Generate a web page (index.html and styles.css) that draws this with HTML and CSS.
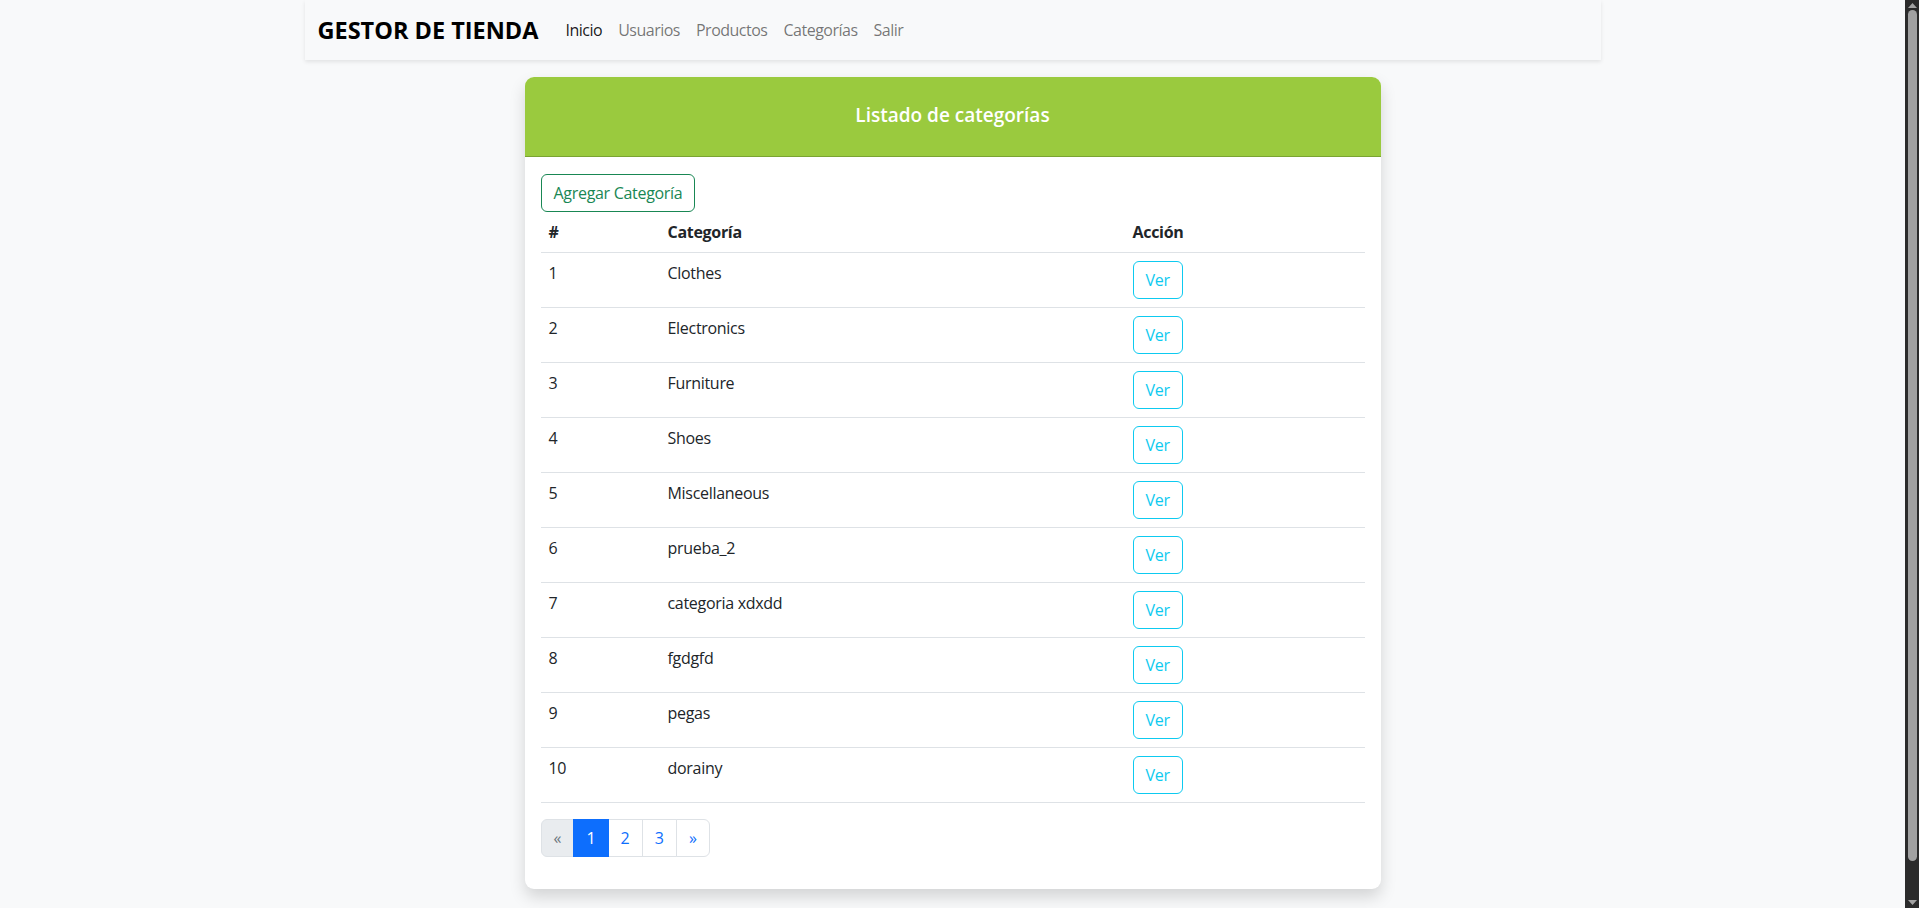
FILE: index.html
```html
<!DOCTYPE html>
<html lang="es">
<head>
<meta charset="utf-8">
<title>Gestor de Tienda</title>
<link rel="stylesheet" href="styles.css">
</head>
<body>
<div class="container">
  <nav class="navbar">
    <a class="brand" href="#">GESTOR DE TIENDA</a>
    <ul class="nav">
      <li><a class="nav-link active" href="#">Inicio</a></li>
      <li><a class="nav-link" href="#">Usuarios</a></li>
      <li><a class="nav-link" href="#">Productos</a></li>
      <li><a class="nav-link" href="#">Categorías</a></li>
      <li><a class="nav-link" href="#">Salir</a></li>
    </ul>
  </nav>
</div>
<main class="main">
  <section class="card">
    <header class="card-header">
      <h2 class="card-title">Listado de categorías</h2>
    </header>
    <div class="card-body">
      <button class="btn btn-success-outline" type="button">Agregar Categoría</button>
      <table class="table">
        <colgroup>
          <col class="col-id">
          <col class="col-name">
          <col class="col-action">
        </colgroup>
        <thead>
          <tr><th>#</th><th>Categoría</th><th>Acción</th></tr>
        </thead>
        <tbody>
          <tr><td>1</td><td>Clothes</td><td><button class="btn btn-info-outline" type="button">Ver</button></td></tr>
          <tr><td>2</td><td>Electronics</td><td><button class="btn btn-info-outline" type="button">Ver</button></td></tr>
          <tr><td>3</td><td>Furniture</td><td><button class="btn btn-info-outline" type="button">Ver</button></td></tr>
          <tr><td>4</td><td>Shoes</td><td><button class="btn btn-info-outline" type="button">Ver</button></td></tr>
          <tr><td>5</td><td>Miscellaneous</td><td><button class="btn btn-info-outline" type="button">Ver</button></td></tr>
          <tr><td>6</td><td>prueba_2</td><td><button class="btn btn-info-outline" type="button">Ver</button></td></tr>
          <tr><td>7</td><td>categoria xdxdd</td><td><button class="btn btn-info-outline" type="button">Ver</button></td></tr>
          <tr><td>8</td><td>fgdgfd</td><td><button class="btn btn-info-outline" type="button">Ver</button></td></tr>
          <tr><td>9</td><td>pegas</td><td><button class="btn btn-info-outline" type="button">Ver</button></td></tr>
          <tr><td>10</td><td>dorainy</td><td><button class="btn btn-info-outline" type="button">Ver</button></td></tr>
        </tbody>
      </table>
      <ul class="pagination">
        <li class="page-item disabled"><span class="page-link">«</span></li>
        <li class="page-item active"><span class="page-link">1</span></li>
        <li class="page-item"><a class="page-link" href="#">2</a></li>
        <li class="page-item"><a class="page-link" href="#">3</a></li>
        <li class="page-item"><a class="page-link" href="#">»</a></li>
      </ul>
    </div>
  </section>
</main>
<div class="scrollbar" aria-hidden="true">
  <svg class="scroll-arrow" width="9" height="6" viewBox="0 0 9 6"><path d="M0 6 L4.5 1 L9 6 Z" fill="#a3a3a3"/></svg>
  <div class="scroll-thumb"></div>
  <svg class="scroll-arrow" width="9" height="6" viewBox="0 0 9 6"><path d="M0 0 L4.5 5 L9 0 Z" fill="#a3a3a3"/></svg>
</div>
</body>
</html>
```
FILE: styles.css
```css
html {
  background: #f8f9fa;
}
body {
  margin: 0 14px 0 0;
  background: #f8f9fa;
  color: #212529;
  font-family: "Open Sans", "Noto Sans", "DejaVu Sans", sans-serif;
  font-size: 16px;
  line-height: 24px;
  letter-spacing: -0.3px;
}
.scrollbar {
  position: fixed;
  top: 0;
  right: 0;
  width: 14px;
  height: 100%;
  background: #2b2b2b;
  display: flex;
  flex-direction: column;
  align-items: center;
  padding: 2px 0;
  box-sizing: border-box;
  gap: 2px;
}
.scroll-arrow {
  flex: none;
}
.scroll-thumb {
  flex: 1;
  width: 9px;
  margin: 0 0 37px;
  border-radius: 5px;
  background: #a1a1a1;
}
.container {
  max-width: 1296px;
  margin: 0 auto;
  padding: 0 12px;
}
.navbar {
  display: flex;
  align-items: center;
  height: 60px;
  padding: 0 13px;
  background: #f8f9fa;
  box-shadow: 0 2px 4px rgba(0, 0, 0, 0.09);
}
.brand {
  font-size: 23.5px;
  font-weight: 700;
  color: #000;
  text-decoration: none;
  margin-right: 19px;
  letter-spacing: 0;
}
.nav {
  display: flex;
  list-style: none;
  margin: 0;
  padding: 0;
}
.nav-link {
  display: block;
  padding: 0 8px;
  color: rgba(0, 0, 0, 0.55);
  text-decoration: none;
  letter-spacing: -0.5px;
}
.nav-link.active {
  color: rgba(0, 0, 0, 0.9);
}
.main {
  padding: 17px 0 71px;
}
.card {
  width: 856px;
  margin: 0 auto;
  background: #fff;
  border-radius: 9px;
  box-shadow: 0 8px 16px rgba(0, 0, 0, 0.15);
  overflow: hidden;
}
.card-header {
  height: 79px;
  display: flex;
  align-items: center;
  justify-content: center;
  background: #9aca3e;
  border-bottom: 1px solid #7aa432;
}
.card-title {
  margin: 0;
  color: #fff;
  font-size: 19px;
  font-weight: 600;
  line-height: 28px;
  padding-bottom: 4px;
  letter-spacing: 0;
}
.card-body {
  padding: 17px 16px 16px;
}
.btn {
  display: inline-block;
  font-family: inherit;
  font-size: 16px;
  line-height: 24px;
  letter-spacing: -0.3px;
  padding: 6px 12px;
  border-radius: 6px;
  background: transparent;
  cursor: pointer;
}
.btn-success-outline {
  color: #198754;
  border: 1px solid #198754;
  display: block;
}
.btn-info-outline {
  color: #0dcaf0;
  border: 1px solid #0dcaf0;
}
.table {
  width: 100%;
  border-collapse: collapse;
  margin-bottom: 16px;
}
.col-id {
  width: 119px;
}
.col-name {
  width: 465px;
}
.table th,
.table td {
  padding: 8px;
  text-align: left;
  border-bottom: 1px solid #dee2e6;
}
.table th {
  font-weight: 700;
  vertical-align: bottom;
}
.table td {
  vertical-align: top;
}
.pagination {
  display: flex;
  list-style: none;
  margin: 0 0 16px;
  padding: 0;
}
.page-link {
  display: block;
  padding: 6px 12px;
  line-height: 24px;
  font-size: 16px;
  letter-spacing: 0;
  color: #0d6efd;
  background: #fff;
  border: 1px solid #dee2e6;
  margin-left: -1px;
  text-decoration: none;
}
.page-item:first-child .page-link {
  margin-left: 0;
  border-radius: 6px 0 0 6px;
}
.page-item:last-child .page-link {
  border-radius: 0 6px 6px 0;
}
.page-item.disabled .page-link {
  color: #6c757d;
  background: #e9ecef;
}
.page-item.active .page-link {
  color: #fff;
  background: #0d6efd;
  border-color: #0d6efd;
  position: relative;
}
```
